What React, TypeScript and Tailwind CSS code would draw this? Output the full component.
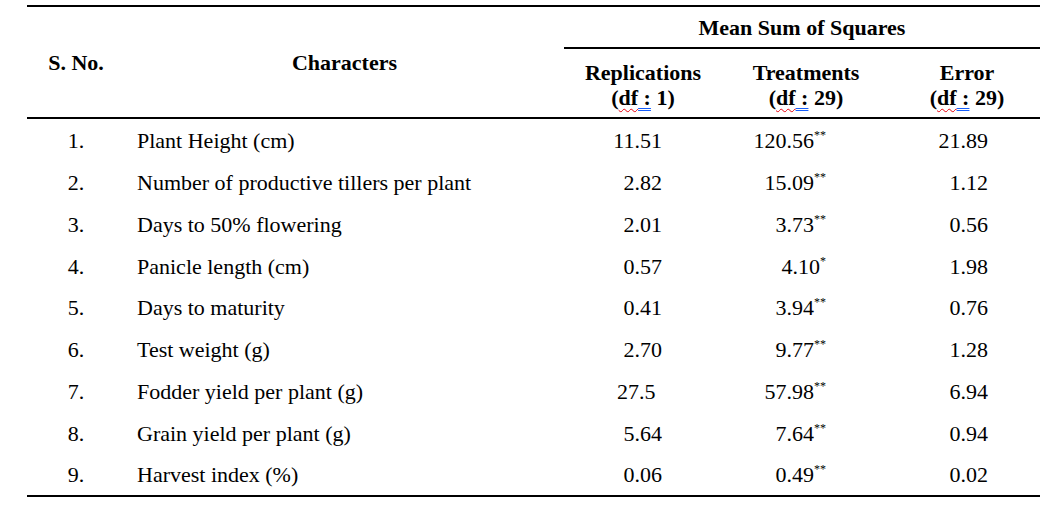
const cols = "grid grid-cols-[98px_439px_158px_168px_150px]"

type Row = {
  no: string
  name: string
  rep: string
  repLeft?: boolean
  trt: string
  sig: string
  err: string
}

const rows: Row[] = [
  { no: "1.", name: "Plant Height (cm)", rep: "11.51", trt: "120.56", sig: "**", err: "21.89" },
  { no: "2.", name: "Number of productive tillers per plant", rep: "2.82", trt: "15.09", sig: "**", err: "1.12" },
  { no: "3.", name: "Days to 50% flowering", rep: "2.01", trt: "3.73", sig: "**", err: "0.56" },
  { no: "4.", name: "Panicle length (cm)", rep: "0.57", trt: "4.10", sig: "*", err: "1.98" },
  { no: "5.", name: "Days to maturity", rep: "0.41", trt: "3.94", sig: "**", err: "0.76" },
  { no: "6.", name: "Test weight (g)", rep: "2.70", trt: "9.77", sig: "**", err: "1.28" },
  { no: "7.", name: "Fodder yield per plant (g)", rep: "27.5", repLeft: true, trt: "57.98", sig: "**", err: "6.94" },
  { no: "8.", name: "Grain yield per plant (g)", rep: "5.64", trt: "7.64", sig: "**", err: "0.94" },
  { no: "9.", name: "Harvest index (%)", rep: "0.06", trt: "0.49", sig: "**", err: "0.02" },
]

function Df({ n }: { n: string }) {
  return (
    <div>
      (
      <span className="underline decoration-wavy decoration-red-600 decoration-1 underline-offset-[3px]">df</span>
      <span className="underline decoration-double decoration-blue-600 decoration-1 underline-offset-[3px]">&nbsp;:</span> {n})
    </div>
  )
}

export default function App() {
  return (
    <div className="min-h-[505px] bg-white pt-[5px] text-black font-[family-name:'Liberation_Serif','Times_New_Roman',serif] text-[22px]">
      <div className="ml-[27px] w-[1013px] border-t-2 border-b-2 border-black">
        {/* header */}
        <div className={`${cols} grid-rows-[42px_68px] border-b-2 border-black font-bold leading-[25px]`}>
          <div className="row-span-2 flex items-center justify-center pt-[1px]">S. No.</div>
          <div className="row-span-2 flex items-center justify-center pt-[1px]">Characters</div>
          <div className="col-span-3 flex items-center justify-center border-b-2 border-black">
            Mean Sum of Squares
          </div>
          <div className="flex flex-col items-center justify-center pt-[3px]">
            <div>Replications</div>
            <Df n="1" />
          </div>
          <div className="flex flex-col items-center justify-center pt-[3px]">
            <div>Treatments</div>
            <Df n="29" />
          </div>
          <div className="flex flex-col items-center justify-center pt-[3px] pl-[4px]">
            <div>Error</div>
            <Df n="29" />
          </div>
        </div>

        {/* body */}
        <div className="flex flex-col">
          {rows.map((r) => (
            <div key={r.no} className={`${cols} h-[41.75px] pt-[3px] items-center leading-none`}>
              <div className="text-center">{r.no}</div>
              <div className="pl-[12px] whitespace-nowrap">{r.name}</div>
              <div className={r.repLeft ? "pl-[53px]" : "text-right pr-[60px]"}>{r.rep}</div>
              <div className="text-right pr-[64px]">
                {r.trt}
                <sup className="text-[12px] -top-[0.75em]">{r.sig}</sup>
              </div>
              <div className="text-right pr-[52px]">{r.err}</div>
            </div>
          ))}
        </div>
      </div>
    </div>
  )
}
